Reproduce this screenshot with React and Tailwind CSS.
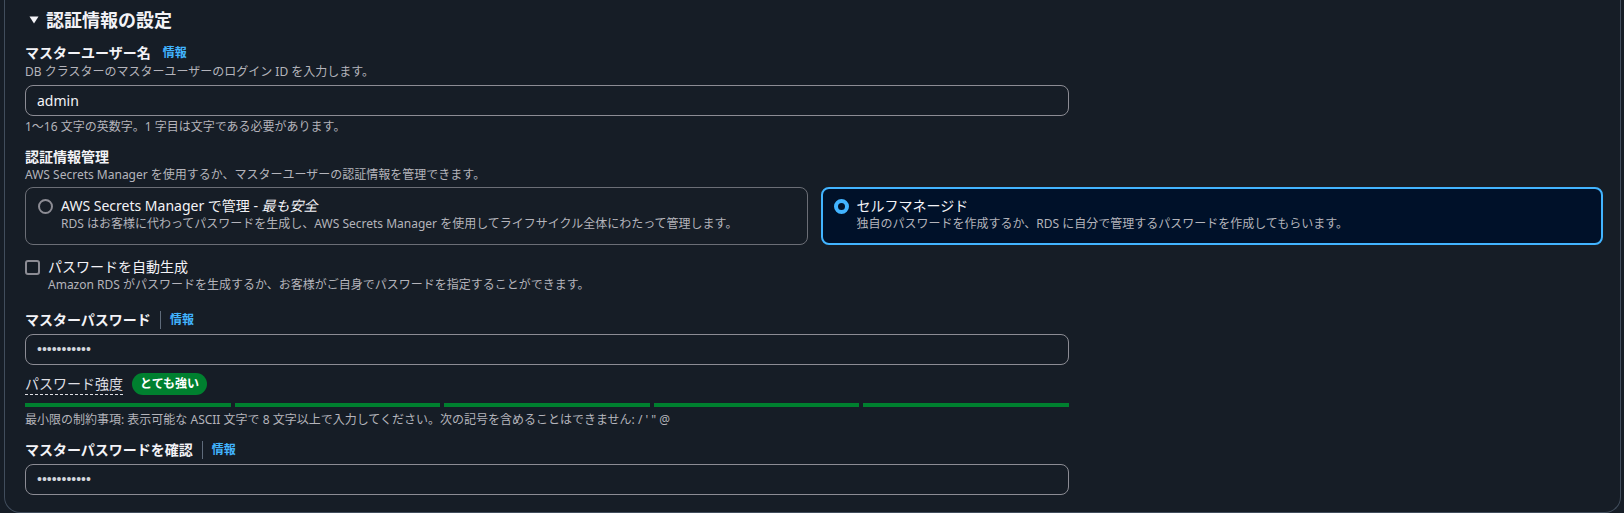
import React from "react";

const FONT = { fontFamily: '"Noto Sans", "Noto Sans CJK JP", sans-serif' };

function Label({ children, info, divider }) {
  return (
    <div className="flex items-center h-[20px] leading-[20px]">
      <span className="text-[14px] font-bold text-[#f3f3f7]">{children}</span>
      {info &&
        (divider ? (
          <span className="ml-[9px] pl-[9px] border-l border-[#5f6b7a] h-[18px] flex items-center text-[12px] font-bold text-[#42b4ff]">
            情報
          </span>
        ) : (
          <span className="ml-[12px] text-[12px] font-bold text-[#42b4ff]">情報</span>
        ))}
    </div>
  );
}

function Desc({ children, className = "" }) {
  return <div className={"text-[12px] leading-[16px] text-[#b4b4bb] " + className}>{children}</div>;
}

function Input({ children, password }) {
  return (
    <div className="w-[1044px] h-[31px] rounded-[8px] border border-[#8c8c94] flex items-center pl-[11px]">
      {password ? (
        <span className="text-[14px] text-[#d1d5db]" style={{ fontFamily: '"Liberation Sans", sans-serif' }}>
          •••••••••••
        </span>
      ) : (
        <span className="text-[14px] text-[#f3f3f7]">{children}</span>
      )}
    </div>
  );
}

export default function App() {
  return (
    <div className="w-[1624px] h-[513px] bg-[#161d26] overflow-hidden pl-[4px] pr-[3px]" style={FONT}>
      <div className="h-[513px] border-l border-r border-b border-[#414d5c] rounded-b-[16px] bg-[#161d26] pl-[20px] pr-[17px] pt-[8px]">
        <div className="flex items-center h-[24px]">
          <svg width="10" height="8" viewBox="0 0 10 8" className="ml-[4px] mr-[7px]">
            <path d="M0.5 0.5 L9.5 0.5 L5 7.5 Z" fill="#f3f3f7" />
          </svg>
          <span className="text-[18px] font-bold text-[#f3f3f7] leading-[24px]">認証情報の設定</span>
        </div>

        <div className="mt-[11px]">
          <Label info>マスターユーザー名</Label>
          <Desc className="mt-[1px]">DB クラスターのマスターユーザーのログイン ID を入力します。</Desc>
          <div className="mt-[5px]">
            <Input>admin</Input>
          </div>
          <Desc className="mt-[3px]">1〜16 文字の英数字。1 字目は文字である必要があります。</Desc>
        </div>

        <div className="mt-[12px]">
          <Label>認証情報管理</Label>
          <Desc>AWS Secrets Manager を使用するか、マスターユーザーの認証情報を管理できます。</Desc>
          <div className="mt-[4px] grid grid-cols-2 gap-[13px]">
            <div className="h-[58px] rounded-[8px] border border-[#6b6e76] flex pl-[12px] pt-[8px]">
              <div className="mt-[3px] w-[15px] h-[15px] rounded-full border-2 border-[#8c8c94] shrink-0" />
              <div className="ml-[8px]">
                <div className="text-[14px] leading-[20px] text-[#f3f3f7]">
                  AWS Secrets Manager で管理 - <i>最も安全</i>
                </div>
                <Desc>RDS はお客様に代わってパスワードを生成し、AWS Secrets Manager を使用してライフサイクル全体にわたって管理します。</Desc>
              </div>
            </div>
            <div className="h-[58px] rounded-[8px] border-2 border-[#42b4ff] bg-[#001129] flex pl-[11px] pt-[7px]">
              <div className="mt-[3px] w-[15px] h-[15px] rounded-full border-[4px] border-[#42b4ff] bg-[#001129] shrink-0" />
              <div className="ml-[8px]">
                <div className="text-[14px] leading-[20px] text-[#f3f3f7]">セルフマネージド</div>
                <Desc>独自のパスワードを作成するか、RDS に自分で管理するパスワードを作成してもらいます。</Desc>
              </div>
            </div>
          </div>
        </div>

        <div className="mt-[12px] flex">
          <div className="mt-[3px] w-[15px] h-[15px] rounded-[3px] border-2 border-[#8c8c94] shrink-0" />
          <div className="ml-[8px]">
            <div className="text-[14px] leading-[20px] text-[#f3f3f7]">パスワードを自動生成</div>
            <Desc>Amazon RDS がパスワードを生成するか、お客様がご自身でパスワードを指定することができます。</Desc>
          </div>
        </div>

        <div className="mt-[17px]">
          <Label info divider>マスターパスワード</Label>
          <div className="mt-[4px]">
            <Input password />
          </div>
          <div className="mt-[8px] h-[22px] flex items-center">
            <span className="text-[14px] leading-[20px] text-[#dedee3] border-b border-dashed border-[#dedee3]">パスワード強度</span>
            <span className="ml-[9px] h-[22px] px-[8px] rounded-full bg-[#00802f] text-white text-[12px] font-bold flex items-center">
              とても強い
            </span>
          </div>
          <div className="mt-[8px] w-[1044px] grid grid-cols-5 gap-[4px]">
            <div className="h-[4px] bg-[#00802f]" />
            <div className="h-[4px] bg-[#00802f]" />
            <div className="h-[4px] bg-[#00802f]" />
            <div className="h-[4px] bg-[#00802f]" />
            <div className="h-[4px] bg-[#00802f]" />
          </div>
          <Desc className="mt-[5px]">最小限の制約事項: 表示可能な ASCII 文字で 8 文字以上で入力してください。次の記号を含めることはできません: / ' " @</Desc>
        </div>

        <div className="mt-[12px]">
          <Label info divider>マスターパスワードを確認</Label>
          <div className="mt-[4px]">
            <Input password />
          </div>
        </div>
      </div>
    </div>
  );
}
